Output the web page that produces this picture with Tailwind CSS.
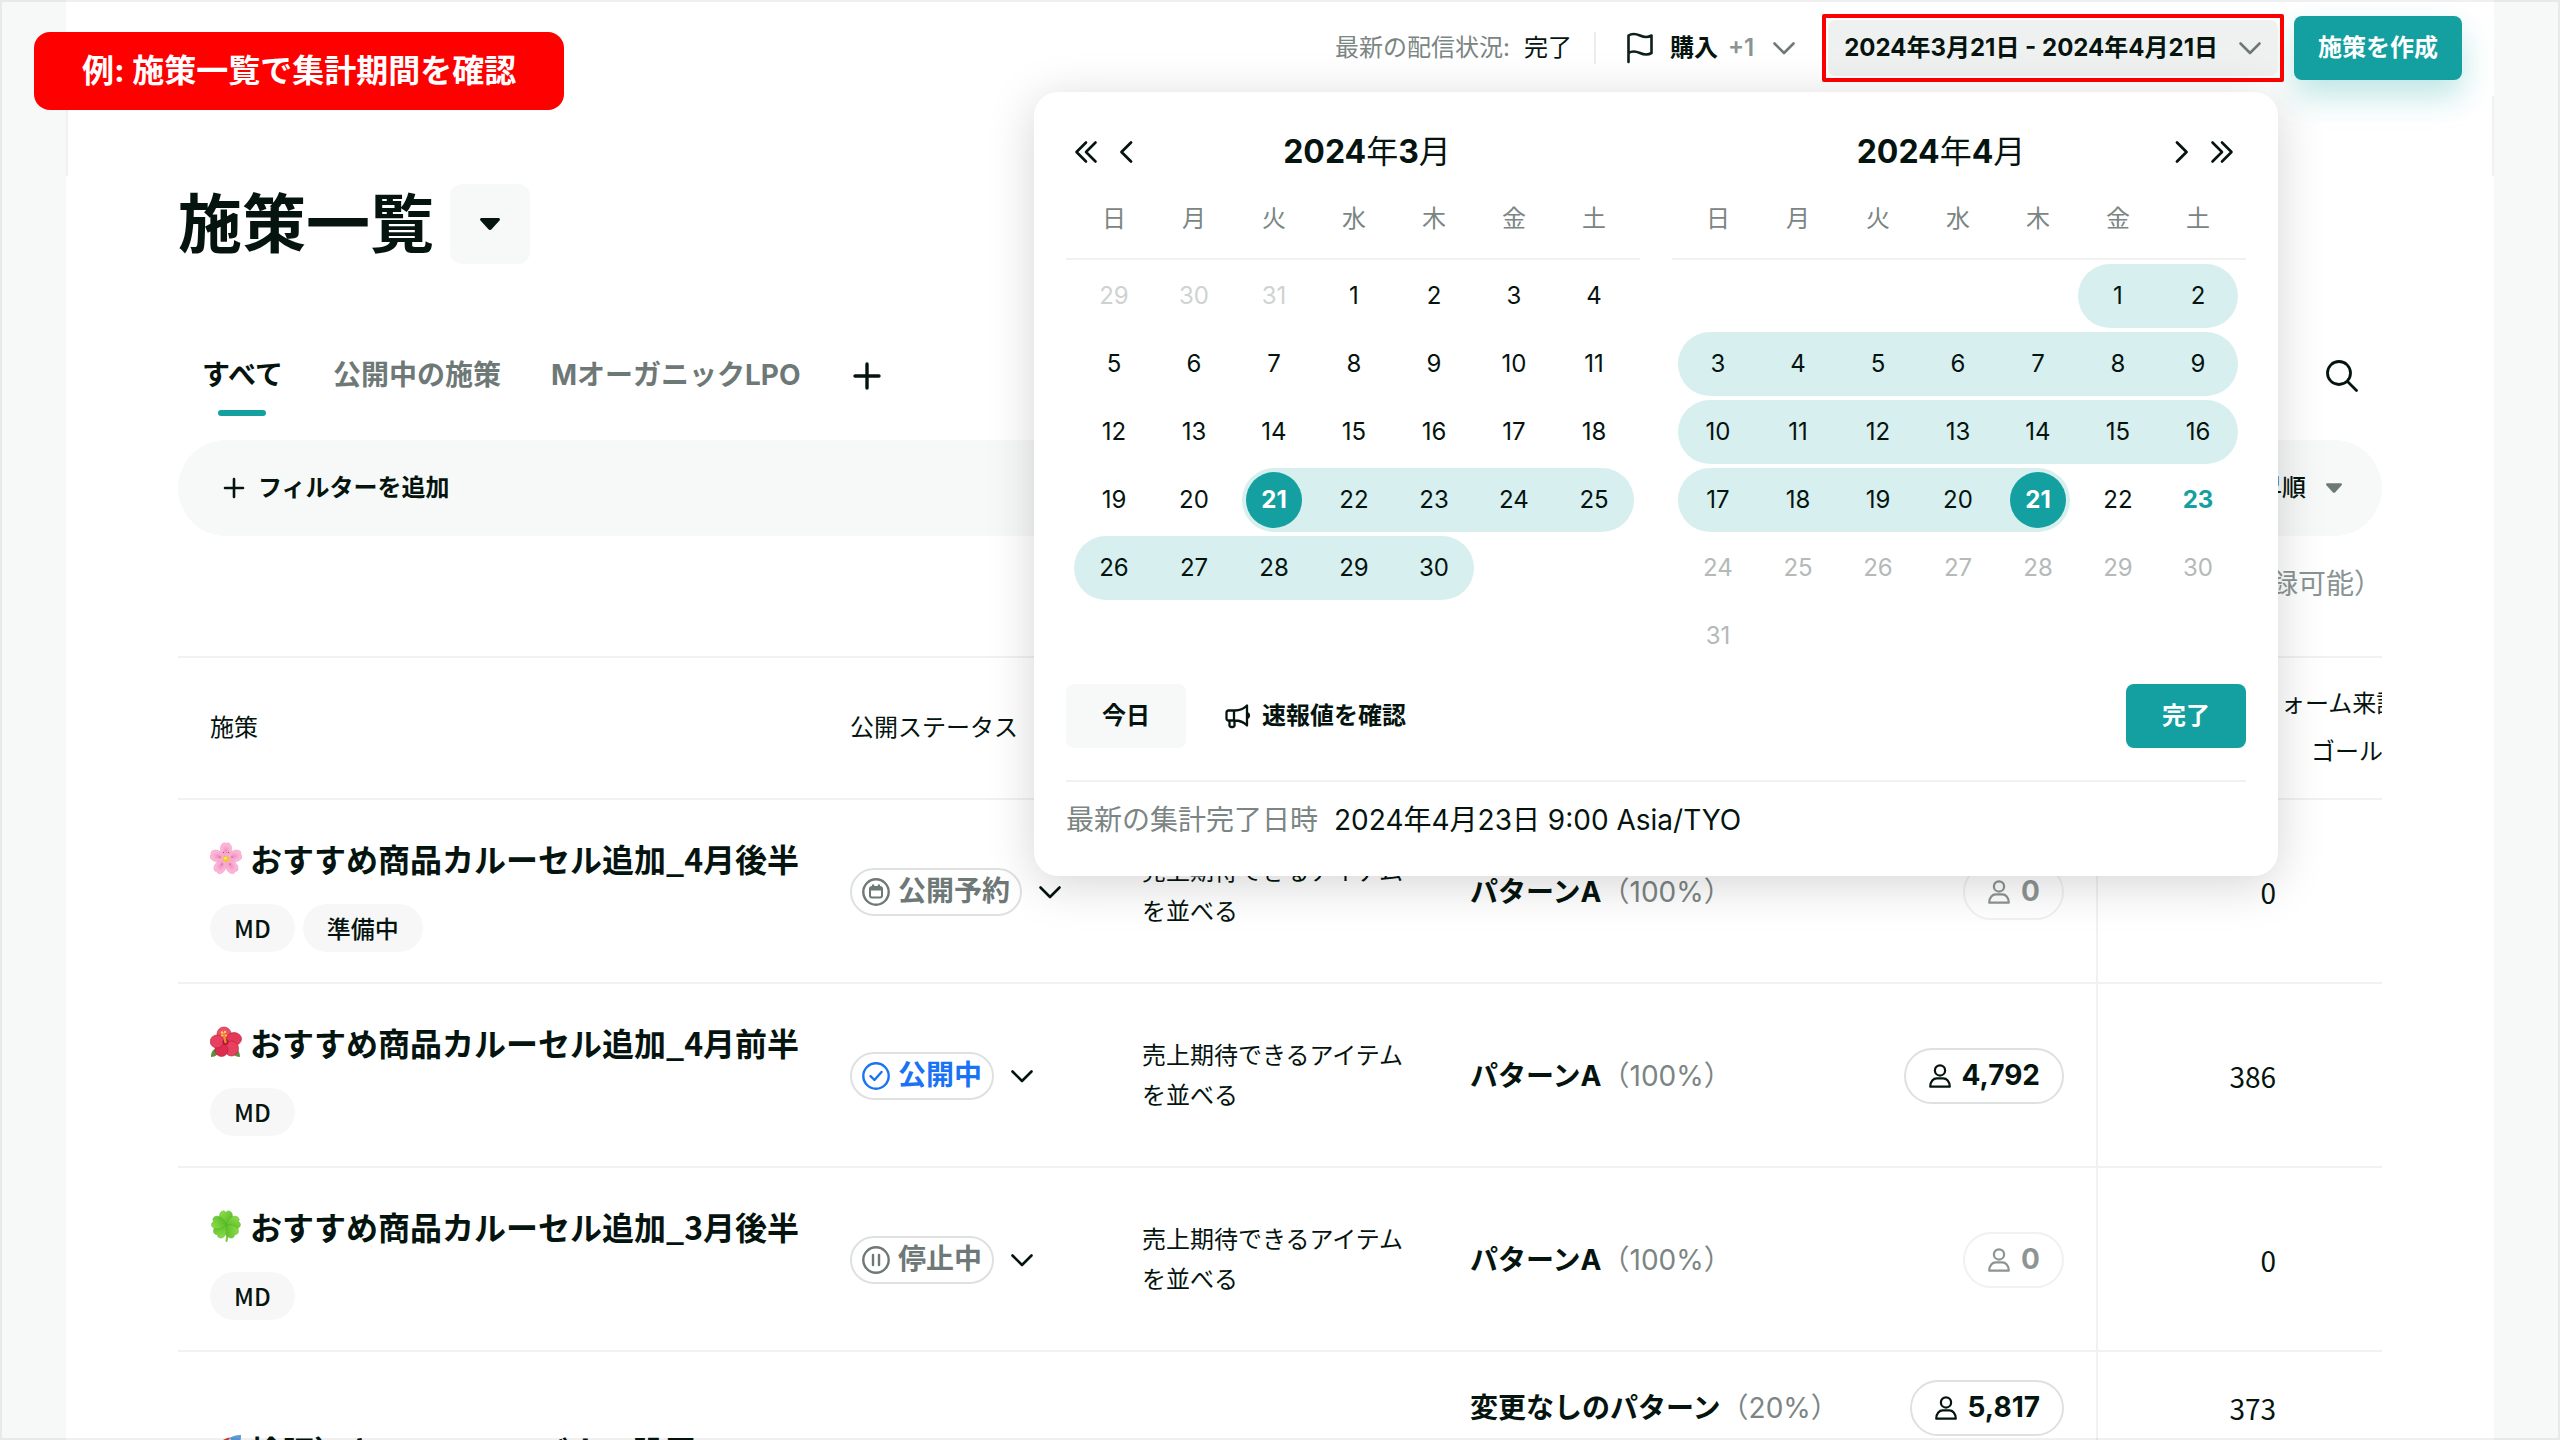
<!DOCTYPE html>
<html lang="ja">
<head>
<meta charset="utf-8">
<title>施策一覧</title>
<script src="https://cdn.jsdelivr.net/npm/@tailwindcss/browser@4"></script>
</head>
<body class="bg-[#f7f9f9] font-[Inter,'Noto_Sans_CJK_JP',sans-serif] text-2xl text-[#05140f]">

<!-- shared icons -->
<svg class="absolute size-0" aria-hidden="true">
  <symbol id="chevron-down" viewBox="0 0 24 24"><path d="M2.5 7.5 12 17l9.500-9.500" fill="none" stroke="currentColor" stroke-width="2.600" stroke-linecap="round" stroke-linejoin="round"/></symbol>
  <symbol id="chevron-left" viewBox="0 0 24 24"><path d="M17 2.500 7.500 12l9.500 9.500" fill="none" stroke="currentColor" stroke-width="2.800" stroke-linecap="round" stroke-linejoin="round"/></symbol>
  <symbol id="chevrons-left" viewBox="0 0 24 24"><path d="M12 2.500 2.500 12l9.500 9.500M21.500 2.500 12 12l9.500 9.500" fill="none" stroke="currentColor" stroke-width="2.600" stroke-linecap="round" stroke-linejoin="round"/></symbol>
  <symbol id="triangle" viewBox="0 0 20 12"><path d="M1.600 0h16.800c1.300 0 2 1.500 1.100 2.500l-8.200 9c-.7.700-1.900.700-2.600 0L.500 2.500C-.400 1.500.300 0 1.600 0Z" fill="currentColor"/></symbol>
  <symbol id="person" viewBox="0 0 24 28"><g fill="none" stroke="currentColor" stroke-width="2.400"><circle cx="12" cy="8" r="5.500"/><path d="M1.500 25.500c0-6 3.500-9 7-9h7c3.500 0 7 3 7 9Z" stroke-linejoin="round"/></g></symbol>
  <symbol id="status-reserved" viewBox="0 0 28 28"><circle cx="14" cy="14" r="12.700" fill="none" stroke="currentColor" stroke-width="2.400"/><rect x="8" y="9" width="12" height="10.500" rx="2" fill="none" stroke="currentColor" stroke-width="2"/><path d="M8 9h12v3.500H8zM10 6.500h2.200V10H10zM15.800 6.500H18V10h-2.200z" fill="currentColor"/></symbol>
  <symbol id="status-live" viewBox="0 0 28 28"><circle cx="14" cy="14" r="12.700" fill="none" stroke="currentColor" stroke-width="2.400"/><path d="m8.500 14.200 4 3.800 7-8" fill="none" stroke="currentColor" stroke-width="2.400" stroke-linecap="round" stroke-linejoin="round"/></symbol>
  <symbol id="status-paused" viewBox="0 0 28 28"><circle cx="14" cy="14" r="12.700" fill="none" stroke="currentColor" stroke-width="2.400"/><path d="M11 9v10M17 9v10" fill="none" stroke="currentColor" stroke-width="2.400" stroke-linecap="round"/></symbol>
  <radialGradient id="petal-pink"><stop offset="0" stop-color="#f08cbd"/><stop offset=".5" stop-color="#f8a9cf"/><stop offset="1" stop-color="#fdbbdc"/></radialGradient>
  <linearGradient id="leaf" x1="0" y1="0" x2="1" y2="1"><stop offset="0" stop-color="#93e04a"/><stop offset="1" stop-color="#4cb51f"/></linearGradient>
  <symbol id="emoji-blossom" viewBox="0 0 32 32">
    <g fill="url(#petal-pink)" stroke="#e991bd" stroke-width=".5">
      <path id="petal" d="M16 17C11 13 8.500 6 12 2c1.500-1.800 3.300-1.300 4 0 .7-1.300 2.500-1.800 4 0C23.500 6 21 13 16 17Z"/>
      <use href="#petal" transform="rotate(72 16 17)"/><use href="#petal" transform="rotate(144 16 17)"/><use href="#petal" transform="rotate(216 16 17)"/><use href="#petal" transform="rotate(288 16 17)"/>
    </g>
    <g fill="#9c2f5f"><circle cx="13.500" cy="10.500" r=".6"/><circle cx="18.500" cy="10.500" r=".6"/><circle cx="22" cy="15" r=".6"/><circle cx="10" cy="15" r=".6"/><circle cx="12" cy="22" r=".6"/><circle cx="20" cy="22" r=".6"/></g>
    <circle cx="16" cy="17" r="3.200" fill="#f1c33a"/><circle cx="15.500" cy="16.300" r="1.300" fill="#fbe588"/>
  </symbol>
  <symbol id="emoji-hibiscus" viewBox="0 0 32 32">
    <path d="M1 31c0-6 3-9 8-9 0 6-3 9-8 9ZM30 31c0-6-3-9-8-9 0 6 3 9 8 9Z" fill="#5c8f3c"/>
    <g stroke="#b51a3c" stroke-width=".6">
      <ellipse cx="14" cy="8" rx="7" ry="7" fill="#ee5068"/><ellipse cx="24" cy="13" rx="7.500" ry="6.500" fill="#e43a58"/><ellipse cx="21.500" cy="22.500" rx="7" ry="7.500" fill="#e8405f"/><ellipse cx="11.500" cy="24" rx="6.500" ry="6.500" fill="#dd2c4e"/><ellipse cx="7" cy="15.500" rx="6.800" ry="6.500" fill="#e8405f"/>
    </g>
    <circle cx="15.500" cy="16" r="3" fill="#b3132f"/>
    <path d="m15.500 16-2-8.500" stroke="#f08a35" stroke-width="2.400" stroke-linecap="round"/>
    <g fill="#ffd04a"><circle cx="12" cy="6.500" r="1.200"/><circle cx="15" cy="6" r="1.200"/><circle cx="12" cy="9.500" r="1.100"/><circle cx="16" cy="9.500" r="1.100"/></g>
  </symbol>
  <symbol id="emoji-clover" viewBox="0 0 32 32">
    <path d="M16 14c1.500 6 1.500 12 .5 17" fill="none" stroke="#79c93c" stroke-width="2" stroke-linecap="round"/>
    <g fill="url(#leaf)" stroke="#4fae2a" stroke-width=".5">
      <path id="clover" d="M16 15C11.500 12.500 8.500 7.500 10 3.500c1.200-3 4.700-3.500 6-1 1.300-2.500 4.800-2 6 1 1.500 4-1.500 9-6 11.500Z"/>
      <use href="#clover" transform="rotate(75 16 15)"/><use href="#clover" transform="rotate(138 16 15)"/><use href="#clover" transform="rotate(222 16 15)"/><use href="#clover" transform="rotate(285 16 15)"/>
    </g>
  </symbol>
  <symbol id="emoji-rocket" viewBox="0 0 32 32">
    <path d="M31 1C21 1 12 7 8 17l7 7C25 20 31 11 31 1Z" fill="#c9d3dc"/><path d="M31 1c-4 0-8 1-11.500 3l8.500 8.500C30 9 31 5 31 1Z" fill="#5b9bd8"/><path d="M20 3.500C15 4 7 9 3 15l9 1Z" fill="#d93838"/><path d="M23 19c1 5-2 9-7 12l-1-8Z" fill="#d93838"/><circle cx="19" cy="12" r="3" fill="#2b3a4a"/><path d="M8 20c-4 1-5 5-6 10 5-1 9-2 10-6Z" fill="#f6a52c"/>
  </symbol>
</svg>

<div class="relative flex h-screen flex-col overflow-hidden">
  <div class="mx-[66px] flex-1 bg-white">

    <header class="relative z-10 flex h-24 items-center justify-end pr-8 whitespace-nowrap">
      <p class="flex gap-3.5"><span class="text-[#7b8583]">最新の配信状況:</span><span>完了</span></p>
      <span class="mr-6 ml-5.5 h-8 border-l-2 border-[#eceeee]"></span>
      <button type="button" class="mr-6.5 ml-1.5 flex items-center">
        <svg class="mr-4 h-8 w-7 text-[#0b1f1b]" viewBox="0 0 28 32"><path d="M2.500 30V3.500c3-2 7-2 11.500 0s8 2 11.500 0v17.500c-3.500 2-7 2-11.500 0s-8.500-2-11.500 0" fill="none" stroke="currentColor" stroke-width="2.600" stroke-linecap="round" stroke-linejoin="round"/></svg>
        <span class="font-bold">購入</span><span class="ml-2.5 font-semibold text-[#8a9492]">+1</span>
        <svg class="ml-4.5 size-6 text-[#6e7977]"><use href="#chevron-down"/></svg>
      </button>
      <div class="relative mr-2.5 rounded-xs border-4 border-[#ff0000] p-0.5">
        <button type="button" class="flex h-14 items-center gap-5 rounded-lg bg-[#eff1f1] px-4 font-bold">
          <span>2024年3月21日 - 2024年4月21日</span>
          <svg class="size-6 text-[#6e7977]"><use href="#chevron-down"/></svg>
        </button>

        <!-- date range popover -->
        <section aria-label="集計期間" class="absolute top-full right-0.5 mt-3.5 w-[1244px] rounded-3xl bg-white px-8 pt-8 pb-9 shadow-[0_8px_48px_rgba(0,0,0,0.17)]">
          <div id="months" class="grid grid-cols-2 gap-8"></div>
          <div class="mt-4 flex h-16 items-center">
            <button type="button" class="h-16 rounded-lg bg-[#f7f8f8] px-9 font-bold">今日</button>
            <button type="button" class="ml-9.5 flex items-center gap-2.5 font-bold">
              <svg class="size-7" viewBox="0 0 28 28"><path d="M4.500 8.500H11c5.500 0 9-2 12-5v20c-3-3-6.500-5-12-5H4.500a2 2 0 0 1-2-2v-6a2 2 0 0 1 2-2ZM10 8.500v10M5.500 18.500v5a1.500 1.500 0 0 0 1.500 1.500h2a1.500 1.500 0 0 0 1.500-1.500v-5M24 11.500c1.300.8 1.300 3.200 0 4" fill="none" stroke="currentColor" stroke-width="2.300" stroke-linecap="round" stroke-linejoin="round"/></svg>
              <span>速報値を確認</span>
            </button>
            <button type="button" class="ml-auto h-16 rounded-lg bg-[#14a0a0] px-9 font-bold text-white">完了</button>
          </div>
          <p class="mt-8 flex gap-4 border-t-2 border-[#f0f1f1] pt-4.5 text-[28px] leading-10"><span class="text-[#7b8583]">最新の集計完了日時</span><span>2024年4月23日 9:00 Asia/TYO</span></p>
        </section>
      </div>
      <button type="button" class="h-16 rounded-lg bg-[#14a0a0] px-6 font-bold text-white shadow-[0_16px_32px_rgba(20,160,160,0.28)]">施策を作成</button>
    </header>

    <div class="h-20 border-x-2 border-[#f0f2f2]"></div>

    <main class="px-28 pt-2">
      <div class="flex h-20 items-center gap-4">
        <h1 class="text-[64px] leading-20 font-bold">施策一覧</h1>
        <button type="button" aria-label="一覧を切り替え" class="flex size-20 items-center justify-center rounded-xl bg-[#f7f8f8]"><svg class="h-3 w-5"><use href="#triangle"/></svg></button>
      </div>

      <nav class="mt-18 flex h-20 items-center gap-[50px] px-6 text-[28px] font-bold text-[#6e7977]">
        <a href="#" class="relative flex h-full items-center text-[#05140f]">すべて<span class="absolute bottom-0 left-1/2 h-1.5 w-12 -translate-x-1/2 rounded-full bg-[#14a0a0]"></span></a>
        <a href="#">公開中の施策</a>
        <a href="#">MオーガニックLPO</a>
        <button type="button" aria-label="タブを追加" class="text-[#05140f]"><svg class="size-8" viewBox="0 0 32 32"><path d="M16 4v24M4 16h24" stroke="currentColor" stroke-width="3.400" stroke-linecap="round"/></svg></button>
        <button type="button" aria-label="検索" class="ml-auto text-[#05140f]"><svg class="size-8" viewBox="0 0 32 32"><circle cx="13" cy="13" r="11.500" fill="none" stroke="currentColor" stroke-width="2.800"/><path d="m21.500 21.500 9 9" stroke="currentColor" stroke-width="2.800" stroke-linecap="round"/></svg></button>
      </nav>

      <div class="mt-6 flex h-24 items-center justify-between rounded-full bg-[#f7f8f8] pr-10 pl-11">
        <button type="button" class="flex items-center gap-3 font-bold"><svg class="size-6" viewBox="0 0 24 24"><path d="M12 3v18M3 12h18" stroke="currentColor" stroke-width="2.600" stroke-linecap="round"/></svg>フィルターを追加</button>
        <button type="button" class="flex items-center gap-5 font-medium">公開日昇順<svg class="h-2.5 w-4 text-[#6e7977]"><use href="#triangle"/></svg></button>
      </div>
      <p class="mt-6 mb-12 h-12 text-right text-[28px] leading-12 text-[#8a9492]">（登録可能）</p>

      <div class="overflow-hidden">
        <table class="w-[calc(100%+57px)] table-fixed border-separate border-spacing-0 text-left [&_td]:border-t-2 [&_td]:border-[#f0f1f1] [&_td]:pt-0.5 [&_th]:border-t-2 [&_th]:border-[#f0f1f1] [&_th]:font-normal">
          <colgroup><col><col class="w-[292px]"><col class="w-[328px]"><col class="w-[400px]"><col class="w-[260px]"><col class="w-[210px]"><col class="w-[131px]"></colgroup>
          <thead>
            <tr class="h-[142px]">
              <th class="px-8">施策</th><th class="px-8">公開ステータス</th><th class="px-8">目的</th><th class="px-8">パターン</th>
              <th class="border-r-2 px-8 text-right">来訪</th><th class="px-8 text-right">ゴール</th>
              <th class="pr-8 leading-12 whitespace-nowrap"><div class="flex flex-col items-end"><span>フォーム来訪&nbsp;</span><span>ゴール数</span></div></th>
            </tr>
          </thead>
          <tbody id="rows"></tbody>
        </table>
      </div>
    </main>
  </div>

  <p class="absolute top-8 left-[34px] z-20 rounded-2xl bg-[#ff0000] px-12 text-[32px] leading-[78px] font-bold text-white">例: 施策一覧で集計期間を確認</p>
  <div class="pointer-events-none absolute inset-0 z-20 border-2 border-black/6"></div>
</div>

<script>
  const icon = (id, cls) => `<svg class="${cls}"><use href="#${id}"/></svg>`;

  /* Calendar */
  const dayClass = {
    off: 'text-[#ced3d2]',
    future: 'text-[#b3bab8]',
    today: 'font-bold text-[#14a0a0]',
    normal: '',
    range: 'bg-[#d8efef]',
    first: 'bg-[#d8efef] rounded-l-full',
    last: 'bg-[#d8efef] rounded-r-full',
    start: 'bg-linear-to-r from-transparent from-50% to-[#d8efef] to-50%',
    end: 'bg-linear-to-r from-[#d8efef] from-50% to-transparent to-50%'
  };
  const day = (n, kind) => {
    if (n === '') return '<span></span>';
    const picked = kind === 'start' || kind === 'end';
    const label = picked
      ? `<span class="flex size-16 items-center justify-center rounded-full bg-[#d8efef]"><span class="flex size-14 items-center justify-center rounded-full bg-[#14a0a0] font-bold text-white">${n}</span></span>`
      : n;
    return `<button type="button" class="flex h-16 items-center justify-center ${dayClass[kind]}">${label}</button>`;
  };
  const month = (y, m, days, prev) => `
    <div>
      <div class="relative flex h-14 items-center justify-center ${prev ? 'pl-7' : 'pr-9'}">
        <h2 class="text-[32px] font-bold">${y}<span class="font-normal">年</span>${m}<span class="font-normal">月</span></h2>
        ${prev
          ? `<span class="absolute left-2 flex gap-4"><button type="button" aria-label="前年">${icon('chevrons-left', 'size-6')}</button><button type="button" aria-label="前月">${icon('chevron-left', 'size-6')}</button></span>`
          : `<span class="absolute right-3 flex gap-4"><button type="button" aria-label="翌月">${icon('chevron-left', 'size-6 rotate-180')}</button><button type="button" aria-label="翌年">${icon('chevrons-left', 'size-6 rotate-180')}</button></span>`}
      </div>
      <div class="grid h-20 grid-cols-7 items-center border-b-2 border-[#f0f1f1] text-center text-[#7b8583] ${prev ? 'pr-1.5 pl-2' : 'pr-2 pl-1.5'}">${[...'日月火水木金土'].map(d => `<span>${d}</span>`).join('')}</div>
      <div class="mt-1 grid grid-cols-7 gap-y-1 ${prev ? 'pr-1.5 pl-2' : 'pr-2 pl-1.5'}">${days.join('')}</div>
    </div>`;

  const march = [29, 30, 31].map(n => day(n, 'off'));
  for (let n = 1; n <= 30; n++) {
    const kind = n < 21 ? 'normal' : n === 21 ? 'start' : n === 25 || n === 30 ? 'last' : n === 26 ? 'first' : 'range';
    march.push(day(n, kind));
  }
  const april = ['', '', '', '', ''].map(n => day(n));
  for (let n = 1; n <= 31; n++) {
    const kind = n > 23 ? 'future' : n === 23 ? 'today' : n === 22 ? 'normal' : n === 21 ? 'end'
      : [1, 3, 10, 17].includes(n) ? 'first' : [2, 9, 16].includes(n) ? 'last' : 'range';
    april.push(day(n, kind));
  }
  document.getElementById('months').innerHTML = month(2024, 3, march, true) + month(2024, 4, april, false);

  /* Campaign rows */
  const statuses = {
    reserved: ['status-reserved', '公開予約', 'text-[#6e7977]'],
    live: ['status-live', '公開中', 'text-[#1a73f5]'],
    paused: ['status-paused', '停止中', 'text-[#6e7977]']
  };
  const campaigns = [
    { emoji: 'emoji-blossom', name: 'おすすめ商品カルーセル追加_4月後半', tags: ['MD', '準備中'], status: 'reserved', goal: '売上期待できるアイテムを並べる', patterns: [['パターンA', '100%', '0', '0']], height: 'h-[184px]' },
    { emoji: 'emoji-hibiscus', name: 'おすすめ商品カルーセル追加_4月前半', tags: ['MD'], status: 'live', goal: '売上期待できるアイテムを並べる', patterns: [['パターンA', '100%', '4,792', '386']], height: 'h-[184px]' },
    { emoji: 'emoji-clover', name: 'おすすめ商品カルーセル追加_3月後半', tags: ['MD'], status: 'paused', goal: '売上期待できるアイテムを並べる', patterns: [['パターンA', '100%', '0', '0']], height: 'h-[184px]' },
    { emoji: 'emoji-rocket', name: '検証）キャンペーンバナー設置', tags: ['MD'], status: 'live', goal: 'バナーの効果を検証する', patterns: [['変更なしのパターン', '20%', '5,817', '373'], ['パターンA', '40%', '11,204', '802'], ['パターンB', '40%', '11,180', '795']], height: 'h-[264px]' }
  ];
  document.getElementById('rows').innerHTML = campaigns.map(c => {
    const [sIcon, sText, sColor] = statuses[c.status];
    return `<tr class="${c.height}">
      <td class="px-8 pt-1! font-['Noto_Sans_CJK_JP',sans-serif]">
        <a href="#" class="flex items-center gap-2 text-[32px] leading-12 font-bold whitespace-nowrap">${icon(c.emoji, 'size-8 shrink-0')}${c.name}</a>
        <div class="mt-5.5 flex gap-2">${c.tags.map(t => `<span class="rounded-full bg-[#f7f7f7] px-6 leading-12 font-medium">${t}</span>`).join('')}</div>
      </td>
      <td class="px-8"><button type="button" class="flex items-center gap-4">
        <span class="flex h-12 items-center gap-2 rounded-full border-2 border-[#dfe1e1] px-2.5 text-[28px] font-bold whitespace-nowrap ${sColor}">${icon(sIcon, 'size-7')}${sText}</span>
        ${icon('chevron-down', 'size-6 shrink-0')}</button></td>
      <td class="px-8 leading-10 break-all">${c.goal}</td>
      <td class="pl-8 text-[28px] whitespace-nowrap"><div class="flex flex-col gap-5">${c.patterns.map(p => `<span class="leading-14"><b>${p[0]}</b><span class="text-[#7b8583]">（${p[1]}）</span></span>`).join('')}</div></td>
      <td class="border-r-2 pr-8"><div class="flex flex-col items-end gap-5">${c.patterns.map(p => `<span class="flex h-14 items-center gap-2.5 rounded-full border-2 border-[#dfe1e1] px-5.5 text-[28px] font-bold ${p[2] === '0' ? 'opacity-45' : ''}">${icon('person', 'h-6.5 w-6')}${p[2]}</span>`).join('')}</div></td>
      <td class="pr-8 text-right font-['Noto_Sans_CJK_JP',sans-serif] text-[28px]"><div class="flex flex-col gap-5">${c.patterns.map(p => `<span class="leading-14">${p[3]}</span>`).join('')}</div></td>
      <td></td>
    </tr>`;
  }).join('');
</script>
</body>
</html>
